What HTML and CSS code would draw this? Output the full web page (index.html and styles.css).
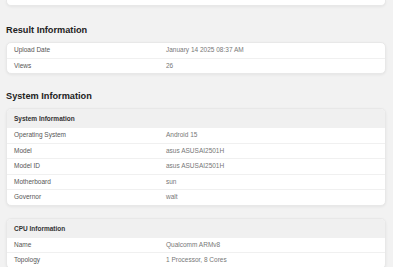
FILE: index.html
```html
<!doctype html>
<html>
<head>
<title>Result</title>
<meta charset="utf-8" />
<link rel="stylesheet" href="styles.css">
</head>

<body>
<div class="page">
	<div class="card tail"></div>

	<h2 class="heading">Result Information</h2>
	<div class="card">
		<div class="row first"><span class="label">Upload Date</span><span class="value">January 14 2025 08:37 AM</span></div>
		<div class="row"><span class="label">Views</span><span class="value">26</span></div>
	</div>

	<h2 class="heading">System Information</h2>
	<div class="card">
		<div class="card-head">System Information</div>
		<div class="row first"><span class="label">Operating System</span><span class="value">Android 15</span></div>
		<div class="row"><span class="label">Model</span><span class="value">asus ASUSAI2501H</span></div>
		<div class="row"><span class="label">Model ID</span><span class="value">asus ASUSAI2501H</span></div>
		<div class="row"><span class="label">Motherboard</span><span class="value">sun</span></div>
		<div class="row"><span class="label">Governor</span><span class="value">walt</span></div>
	</div>

	<div class="card gap">
		<div class="card-head">CPU Information</div>
		<div class="row first"><span class="label">Name</span><span class="value">Qualcomm ARMv8</span></div>
		<div class="row"><span class="label">Topology</span><span class="value">1 Processor, 8 Cores</span></div>
	</div>
</div>
</body>
</html>
```

FILE: styles.css
```css
html, body { margin: 0; padding: 0; background: #f2f2f2; }
body { font-family: 'Liberation Sans', Arial, sans-serif; height: 267px; overflow: hidden; }
.page { padding: 0 7px 0 6px; }

.heading { margin: 16px 0 6px; font-size: 9.2px; line-height: 12px; font-weight: bold; color: #222; }

.card { background: #fff; border: 1px solid #e8e8e8; border-radius: 5px; box-shadow: 0 1px 3px rgba(0,0,0,0.06); overflow: hidden; }
.card.tail { height: 5px; border-top: 0; border-radius: 0 0 5px 5px; }
.card.tail + .heading { margin-top: 18px; }
.card.gap { margin-top: 12px; }

/* grey title strip at the top of a table card */
.card-head { background: #f0f0f0; height: 19px; line-height: 19px; padding: 0 7px; font-size: 6.5px; font-weight: bold; color: #333; }

.row { display: flex; height: 14.5px; line-height: 14.5px; border-top: 1px solid #f0f0f0; font-size: 6.5px; }
.row.first { border-top: 0; }
.label { width: 152px; padding-left: 7px; color: #555; }
.value { color: #777; }
```
